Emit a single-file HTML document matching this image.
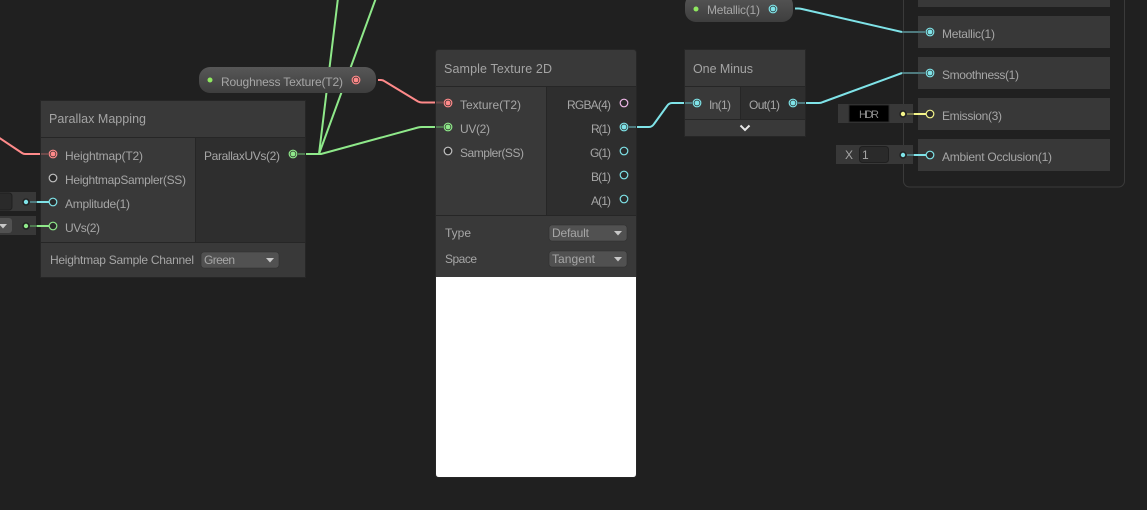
<!DOCTYPE html>
<html><head><meta charset="utf-8"><style>
html,body{margin:0;padding:0;background:#202020;width:1147px;height:510px;overflow:hidden}
svg{display:block}
text{font-family:"Liberation Sans",sans-serif;font-size:12px;fill:#a6a6a6}
.h{font-size:12.5px;fill:#a4a4a4}
</style></head><body>
<svg width="1147" height="510" viewBox="0 0 1147 510" xmlns="http://www.w3.org/2000/svg">
<defs>
<linearGradient id="p" x1="0" y1="0" x2="0" y2="1"><stop offset="0" stop-color="#575757"/><stop offset="1" stop-color="#3e3e3e"/></linearGradient>
</defs>
<rect width="1147" height="510" fill="#202020"/>
<!-- master outline -->
<rect x="903.5" y="-20" width="221" height="207" rx="6" fill="none" stroke="#3a3a3a"/>
<!-- green fan wires -->
<g fill="none" stroke="#8fe98a" stroke-width="2" stroke-linejoin="round">
<path d="M306 154H319L338 -2"/><path d="M319 154L376 -2"/><path d="M306 154H321L418 127.500Q420 127 422 127H436"/>
</g>
<!-- pills -->
<rect x="199" y="67" width="177" height="26" rx="11" fill="url(#p)"/>
<rect x="685" y="-6" width="108" height="28" rx="11" fill="url(#p)"/>
<!-- wires -->
<g fill="none" stroke-width="2" stroke-linejoin="round">
<path d="M378 80H381Q383 80 385 81.500L418 101.500Q420 102.500 422 102.500H436" stroke="#ff8a8a"/>
<path d="M-2 137L22 153Q23.500 154 25 154H41" stroke="#ff8a8a"/>
<path d="M637 127H649Q652 127 654 124L667 106Q669 103 672 103H685" stroke="#7fe3e8"/>
<path d="M806 103H819Q821 103 823 102L902 73" stroke="#7fe3e8"/>
<path d="M795 8.500H798Q800 8.500 802 9L902 32" stroke="#7fe3e8"/>
</g>
<!-- master rows -->
<g fill="#383838">
<rect x="918" y="-20" width="192" height="27"/>
<rect x="918" y="16" width="192" height="32"/>
<rect x="918" y="57" width="192" height="32"/>
<rect x="918" y="98" width="192" height="32"/>
<rect x="918" y="139" width="192" height="32"/>
</g>
<g fill="none" stroke-width="2">
<path d="M902 32H925" stroke="#4f7a7e"/><path d="M902 73H925" stroke="#4f7a7e"/>
</g>
<text x="942" y="38" textLength="53">Metallic(1)</text>
<text x="942" y="79" textLength="77">Smoothness(1)</text>
<text x="942" y="120" textLength="60">Emission(3)</text>
<text x="942" y="161" textLength="110">Ambient Occlusion(1)</text>
<!-- Parallax node -->
<rect x="40.500" y="100.500" width="265" height="177" fill="#393939" stroke="#262626"/>
<rect x="196" y="138" width="109" height="105" fill="#2e2e2e"/>
<rect x="41" y="137" width="264" height="1" fill="#262626"/>
<rect x="41" y="242" width="264" height="1" fill="#262626"/>
<rect x="195" y="138" width="1" height="104" fill="#262626"/>
<text class="h" x="49" y="123" textLength="97">Parallax Mapping</text>
<text x="65" y="160" textLength="78">Heightmap(T2)</text>
<text x="65" y="184" textLength="121">HeightmapSampler(SS)</text>
<text x="65" y="208" textLength="65">Amplitude(1)</text>
<text x="65" y="232" textLength="35">UVs(2)</text>
<text x="204" y="160" textLength="76">ParallaxUVs(2)</text>
<text x="50" y="264" textLength="144">Heightmap Sample Channel</text>
<rect x="201" y="252" width="78" height="16" rx="3" fill="#515151" stroke="#303030" stroke-width=".6"/>
<text x="204" y="264" textLength="31">Green</text>
<path d="M266 258h8l-4 4.500z" fill="#c8c8c8"/>
<!-- Left stubs -->
<rect x="0" y="192" width="36" height="19" fill="#383838"/>
<rect x="-4" y="193" width="16" height="17" rx="3" fill="#2a2a2a" stroke="#1f1f1f"/>
<rect x="0" y="216" width="36" height="19" fill="#383838"/>
<rect x="-6" y="218" width="18" height="15" rx="3" fill="#515151"/>
<path d="M-1 224h8l-4 4.500z" fill="#c8c8c8"/>
<circle cx="26" cy="202" r="3.700" fill="#222"/><circle cx="26" cy="202" r="2.200" fill="#7fe3e8"/>
<circle cx="26" cy="226" r="3.700" fill="#222"/><circle cx="26" cy="226" r="2.200" fill="#8fe98a"/>
<g fill="none" stroke-width="2">
<path d="M30 202H37" stroke="#4f7a7e"/><path d="M37 202H50" stroke="#7fe3e8"/>
<path d="M30 226H37" stroke="#4f7a50"/><path d="M37 226H50" stroke="#8fe98a"/>
<path d="M41 154H48" stroke="#6d4a4a"/>
<path d="M298 154H305" stroke="#4f7a50"/>
</g>
<!-- Sample Texture node -->
<rect x="435.500" y="49.500" width="201" height="428" rx="3" fill="#393939" stroke="#262626"/>
<rect x="547" y="87" width="89" height="128" fill="#2e2e2e"/>
<rect x="436" y="86" width="200" height="1" fill="#262626"/>
<rect x="436" y="215" width="200" height="1" fill="#262626"/>
<rect x="546" y="87" width="1" height="128" fill="#262626"/>
<path d="M436 277H636V474Q636 477 633 477H439Q436 477 436 474Z" fill="#fff"/>
<text class="h" x="444" y="73" textLength="108">Sample Texture 2D</text>
<text x="460" y="109" textLength="61">Texture(T2)</text>
<text x="460" y="133" textLength="30">UV(2)</text>
<text x="460" y="157" textLength="64">Sampler(SS)</text>
<text x="567" y="109" textLength="44">RGBA(4)</text>
<text x="591" y="133" textLength="20">R(1)</text>
<text x="590" y="157" textLength="21">G(1)</text>
<text x="591" y="181" textLength="20">B(1)</text>
<text x="591" y="205" textLength="20">A(1)</text>
<text x="445" y="237" textLength="26">Type</text>
<text x="445" y="263" textLength="32">Space</text>
<rect x="549" y="225" width="78" height="16" rx="3" fill="#515151" stroke="#303030" stroke-width=".6"/>
<rect x="549" y="251" width="78" height="16" rx="3" fill="#515151" stroke="#303030" stroke-width=".6"/>
<text x="552" y="237" textLength="37">Default</text>
<text x="552" y="263" textLength="43">Tangent</text>
<path d="M614 231h8l-4 4.500z" fill="#c8c8c8"/><path d="M614 257h8l-4 4.500z" fill="#c8c8c8"/>
<g fill="none" stroke-width="2">
<path d="M436 102.500H443" stroke="#6d4a4a"/><path d="M436 127H443" stroke="#4f7a50"/>
<path d="M629 127H636" stroke="#4f7a7e"/>
</g>
<!-- One Minus node -->
<rect x="684.500" y="49.500" width="121" height="87" fill="#393939" stroke="#262626"/>
<rect x="741" y="87" width="64" height="32" fill="#2e2e2e"/>
<rect x="685" y="86" width="120" height="1" fill="#262626"/>
<rect x="685" y="119" width="120" height="1" fill="#262626"/>
<rect x="740" y="87" width="1" height="32" fill="#262626"/>
<text class="h" x="693" y="73" textLength="60">One Minus</text>
<text x="709" y="109" textLength="22">In(1)</text>
<text x="749" y="109" textLength="31">Out(1)</text>
<path d="M740.500 125.500L745 130L749.500 125.500" fill="none" stroke="#e8e8e8" stroke-width="2"/>
<path d="M685 103H692M798 103H805" fill="none" stroke="#4f7a7e" stroke-width="2"/>
<!-- Stubs right -->
<rect x="838" y="104" width="75" height="19" fill="#383838"/>
<rect x="849" y="105" width="40" height="17" fill="#000" stroke="#2a2a2a"/>
<text x="859" y="118" textLength="20" style="font-size:11px;fill:#8a8a8a">HDR</text>
<rect x="836" y="145" width="77" height="19" fill="#383838"/>
<text x="845" y="159" textLength="8">X</text>
<rect x="859.500" y="146.500" width="29" height="16" rx="3" fill="#2a2a2a" stroke="#1f1f1f"/>
<text x="862" y="159" textLength="6">1</text>
<circle cx="903" cy="114" r="3.700" fill="#222"/><circle cx="903" cy="114" r="2.200" fill="#f5f58a"/>
<circle cx="903" cy="155" r="3.700" fill="#222"/><circle cx="903" cy="155" r="2.200" fill="#7fe3e8"/>
<g fill="none" stroke-width="2">
<path d="M907 114H914" stroke="#7a7a50"/><path d="M914 114H927" stroke="#f5f58a"/>
<path d="M907 155H914" stroke="#4f7a7e"/><path d="M914 155H927" stroke="#7fe3e8"/>
</g>
<!-- Pills text and dots -->
<circle cx="210" cy="80" r="2.500" fill="#8fe860"/>
<text x="221" y="86" textLength="122">Roughness Texture(T2)</text>
<circle cx="696" cy="9" r="2.500" fill="#8fe860"/>
<text x="707" y="14" textLength="53">Metallic(1)</text>
<!-- Ports -->
<g fill="#2a2a2a" stroke-width="1.200">
<circle cx="53" cy="154" r="3.800" stroke="#ff8a8a"/>
<circle cx="53" cy="178" r="3.800" stroke="#c0c0c0"/>
<circle cx="53" cy="202" r="3.800" stroke="#7fe3e8"/>
<circle cx="53" cy="226" r="3.800" stroke="#8fe98a"/>
<circle cx="293" cy="154" r="3.800" stroke="#8fe98a"/>
<circle cx="356" cy="80" r="3.800" stroke="#ff8a8a"/>
<circle cx="448" cy="103" r="3.800" stroke="#ff8a8a"/>
<circle cx="448" cy="127" r="3.800" stroke="#8fe98a"/>
<circle cx="448" cy="151" r="3.800" stroke="#c0c0c0"/>
<circle cx="624" cy="103" r="3.800" stroke="#f0b8e8"/>
<circle cx="624" cy="127" r="3.800" stroke="#7fe3e8"/>
<circle cx="624" cy="151" r="3.800" stroke="#7fe3e8"/>
<circle cx="624" cy="175" r="3.800" stroke="#7fe3e8"/>
<circle cx="624" cy="199" r="3.800" stroke="#7fe3e8"/>
<circle cx="697" cy="103" r="3.800" stroke="#7fe3e8"/>
<circle cx="793" cy="103" r="3.800" stroke="#7fe3e8"/>
<circle cx="773" cy="9" r="3.800" stroke="#7fe3e8"/>
<circle cx="930" cy="32" r="3.800" stroke="#7fe3e8"/>
<circle cx="930" cy="73" r="3.800" stroke="#7fe3e8"/>
<circle cx="930" cy="114" r="3.800" stroke="#f5f58a"/>
<circle cx="930" cy="155" r="3.800" stroke="#7fe3e8"/>
</g>
<g>
<circle cx="53" cy="154" r="2.500" fill="#ff8a8a"/>
<circle cx="356" cy="80" r="2.500" fill="#ff8a8a"/>
<circle cx="448" cy="103" r="2.500" fill="#ff8a8a"/>
<circle cx="293" cy="154" r="2.500" fill="#8fe98a"/>
<circle cx="448" cy="127" r="2.500" fill="#8fe98a"/>
<circle cx="624" cy="127" r="2.500" fill="#7fe3e8"/>
<circle cx="697" cy="103" r="2.500" fill="#7fe3e8"/>
<circle cx="793" cy="103" r="2.500" fill="#7fe3e8"/>
<circle cx="773" cy="9" r="2.500" fill="#7fe3e8"/>
<circle cx="930" cy="32" r="2.500" fill="#7fe3e8"/>
<circle cx="930" cy="73" r="2.500" fill="#7fe3e8"/>
</g>
</svg>
</body></html>
